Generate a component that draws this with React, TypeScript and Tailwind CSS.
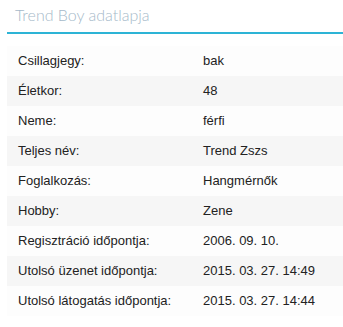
import React from "react"

const rows: [string, string][] = [
  ["Csillagjegy:", "bak"],
  ["Életkor:", "48"],
  ["Neme:", "férfi"],
  ["Teljes név:", "Trend Zszs"],
  ["Foglalkozás:", "Hangmérnők"],
  ["Hobby:", "Zene"],
  ["Regisztráció időpontja:", "2006. 09. 10."],
  ["Utolsó üzenet időpontja:", "2015. 03. 27. 14:49"],
  ["Utolsó látogatás időpontja:", "2015. 03. 27. 14:44"],
]

export default function App() {
  return (
    <div className="w-[343px] h-[327px] bg-white pl-[7px] overflow-hidden">
      {/* Header */}
      <div className="h-[34px] border-b-[2px] border-[#2db4d6] pl-2 pt-[4px]">
        <h2 className="font-['Lato',sans-serif] font-light text-[16px] leading-[22px] text-[#a5b9c9]">
          Trend Boy adatlapja
        </h2>
      </div>

      {/* Profile table */}
      <div className="mt-[12px] font-['Liberation_Sans',Arial,sans-serif] text-[13px] text-[#222]">
        {rows.map(([label, value], i) => (
          <div
            key={label}
            className={`flex items-center h-[30px] ${i % 2 === 1 ? "bg-[#f6f6f6]" : "bg-[#fdfdfd]"}`}
          >
            <div className="w-[196px] pl-[11px]">{label}</div>
            <div>{value}</div>
          </div>
        ))}
      </div>
    </div>
  )
}
